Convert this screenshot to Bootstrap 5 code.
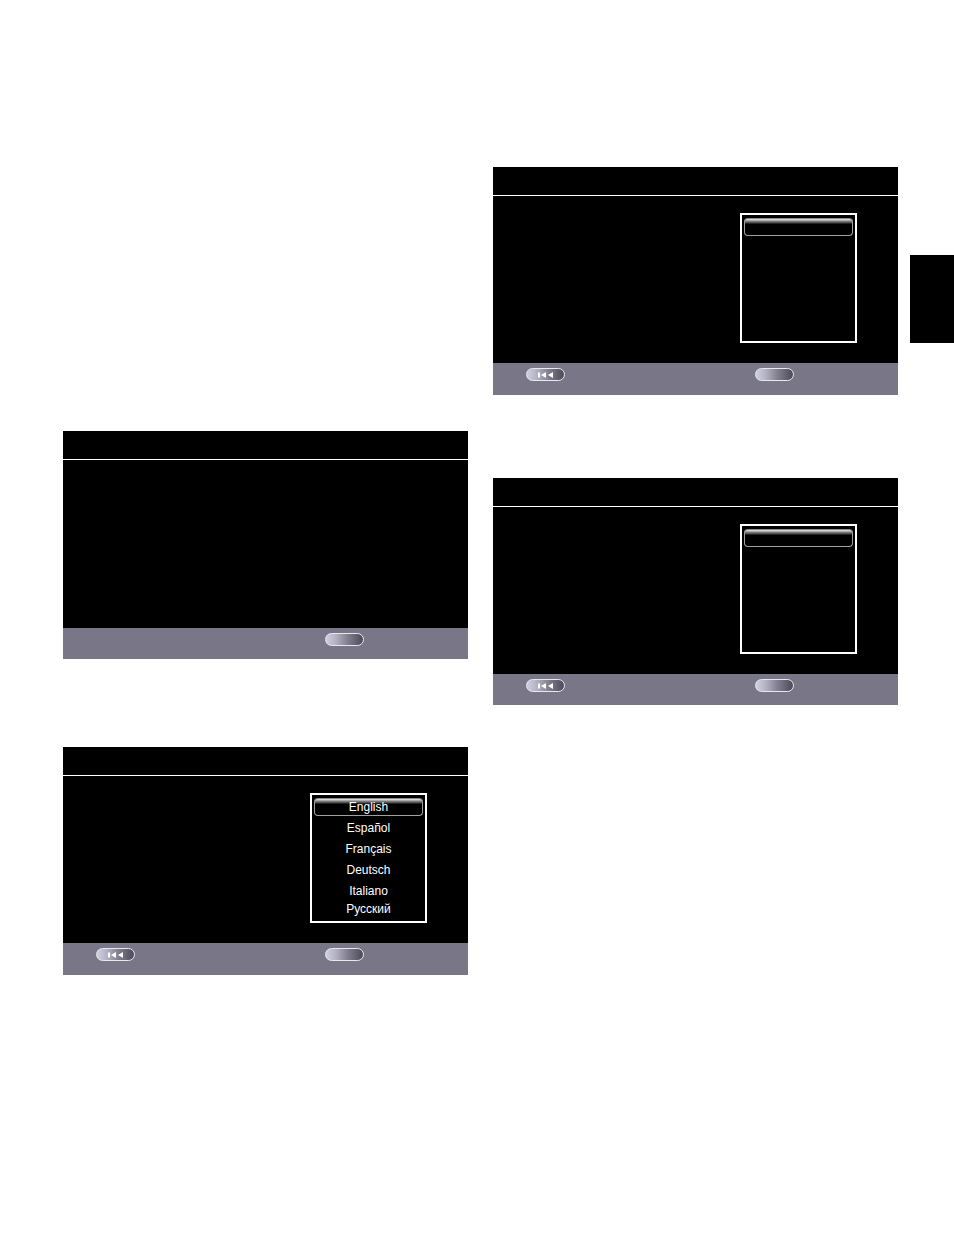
<!DOCTYPE html>
<html lang="en">
<head>
<meta charset="utf-8">
<meta name="viewport" content="width=device-width, initial-scale=1">
<title>Setup screens</title>
<link href="https://cdn.jsdelivr.net/npm/bootstrap@5.3.0/dist/css/bootstrap.min.css" rel="stylesheet">
<style>
  body { background: #fff; font-family: "Liberation Sans", Arial, sans-serif; }
  .manual-page { min-height: 100vh; padding: 167px 56px 0 63px; }
  .manual-columns { display: grid; grid-template-columns: 1fr 1fr; column-gap: 25px; }
  .column-start { padding-top: 264px; row-gap: 88px; }
  .column-end { row-gap: 83px; }
  .screen { background: #000; color: #fff; }
  .screen-title { height: 29px; border-bottom: 1px solid #fff; }
  .screen-body { height: 167px; padding: 17px 41px 0 0; }
  .screen-body-tall { height: 168px; }
  .screen-keys { display: grid; grid-template-columns: 11fr 6fr; height: 32px; padding-top: 5px; background: #797688; }
  .screen-keys-short { height: 31px; }
  .key-slot { padding-left: 33px; }
  .key-pill {
    width: 39px; height: 13px; padding: 0; border: 1px solid #e9e8ee; border-radius: 7px;
    background: linear-gradient(90deg, #d0cfe0 0%, #b5b4c5 25%, #82808f 58%, #51505e 95%);
  }
  .option-box { width: 117px; height: 130px; padding: 3px 2px; border: 2px solid #fff; }
  .option {
    flex: none; height: 21px; padding: 0 0 3px; border: 0; background: transparent; color: #fff;
    font-size: 12px; line-height: 18px; text-align: center;
  }
  .option-selected {
    height: 18px; margin-bottom: 3px; padding: 0; border: 1px solid #a0a0a0; border-top-color: #888; border-radius: 4px;
    background: linear-gradient(#ddd 0, #ccc 1px, #888 2px, #444 4px, #000 5px);
    line-height: 16px;
  }
  .option-last { height: 15px; line-height: 12px; }
  .side-tab { top: 255px; right: 0; width: 44px; height: 88px; background: #000; }
</style>
</head>
<body>
<main class="manual-page position-relative">
  <div class="manual-columns">
    <div class="column-start d-flex flex-column">
      <section class="screen">
        <header class="screen-title"></header>
        <div class="screen-body screen-body-tall"></div>
        <footer class="screen-keys screen-keys-short">
          <div class="key-slot"></div>
          <div class="d-flex align-items-start"><button type="button" class="key-pill" aria-label="Exit"></button></div>
        </footer>
      </section>
      <section class="screen">
        <header class="screen-title"></header>
        <div class="screen-body d-flex justify-content-end">
          <div class="option-box d-flex flex-column">
            <button type="button" class="option option-selected">English</button>
            <button type="button" class="option">Español</button>
            <button type="button" class="option">Français</button>
            <button type="button" class="option">Deutsch</button>
            <button type="button" class="option">Italiano</button>
            <button type="button" class="option option-last">Русский</button>
          </div>
        </div>
        <footer class="screen-keys">
          <div class="key-slot d-flex align-items-start">
            <button type="button" class="key-pill d-flex align-items-center justify-content-center" aria-label="Back">
              <svg width="16" height="6" viewBox="0 0 16 6" fill="#fff" aria-hidden="true"><path d="M0 .5h2v5H0zM8 0v6L3 3zM15 0v6L10 3z"/></svg>
            </button>
          </div>
          <div class="d-flex align-items-start"><button type="button" class="key-pill" aria-label="Exit"></button></div>
        </footer>
      </section>
    </div>
    <div class="column-end d-flex flex-column">
      <section class="screen">
        <header class="screen-title"></header>
        <div class="screen-body d-flex justify-content-end">
          <div class="option-box d-flex flex-column">
            <button type="button" class="option option-selected" aria-label="Selected option"></button>
          </div>
        </div>
        <footer class="screen-keys">
          <div class="key-slot d-flex align-items-start">
            <button type="button" class="key-pill d-flex align-items-center justify-content-center" aria-label="Back">
              <svg width="16" height="6" viewBox="0 0 16 6" fill="#fff" aria-hidden="true"><path d="M0 .5h2v5H0zM8 0v6L3 3zM15 0v6L10 3z"/></svg>
            </button>
          </div>
          <div class="d-flex align-items-start"><button type="button" class="key-pill" aria-label="Exit"></button></div>
        </footer>
      </section>
      <section class="screen">
        <header class="screen-title"></header>
        <div class="screen-body d-flex justify-content-end">
          <div class="option-box d-flex flex-column">
            <button type="button" class="option option-selected" aria-label="Selected option"></button>
          </div>
        </div>
        <footer class="screen-keys screen-keys-short">
          <div class="key-slot d-flex align-items-start">
            <button type="button" class="key-pill d-flex align-items-center justify-content-center" aria-label="Back">
              <svg width="16" height="6" viewBox="0 0 16 6" fill="#fff" aria-hidden="true"><path d="M0 .5h2v5H0zM8 0v6L3 3zM15 0v6L10 3z"/></svg>
            </button>
          </div>
          <div class="d-flex align-items-start"><button type="button" class="key-pill" aria-label="Exit"></button></div>
        </footer>
      </section>
    </div>
  </div>
  <aside class="side-tab position-absolute"></aside>
</main>
<script src="https://cdn.jsdelivr.net/npm/bootstrap@5.3.0/dist/js/bootstrap.bundle.min.js"></script>
</body>
</html>
